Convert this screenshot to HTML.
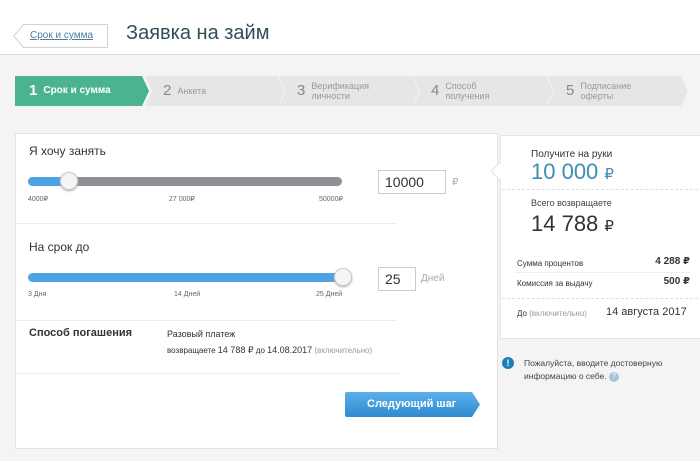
<!DOCTYPE html><html><head><meta charset="utf-8"><style>
body{margin:0;width:700px;height:461px;background:#f4f4f4;font-family:"Liberation Sans","DejaVu Sans",sans-serif;position:relative;overflow:hidden;color:#333}
.a{position:absolute}
.hdr{left:0;top:0;width:700px;height:54px;background:#fff;border-bottom:1px solid #d8d8d8}
.step{top:76px;height:30px;background:#e6e6e8;clip-path:polygon(0 0,calc(100% - 7px) 0,100% 50%,calc(100% - 7px) 100%,0 100%,7px 50%);color:#999;font-size:9px;line-height:10px;display:flex;align-items:center}
.step b{font-size:15px;font-weight:normal;margin-right:6px;color:#888}
.panel{left:15px;top:133px;width:481px;height:314px;background:#fff;border:1px solid #e2e2e2}
.track{height:9px;border-radius:5px}
.thumb{width:16px;height:16px;border-radius:50%;background:#f5f5f5;border:1px solid #ccc;box-shadow:0 1px 2px #aaa}
.lbl{font-size:7px;color:#666;top:0}
.inp{border:1px solid #ccc;background:#fff;font-size:14px;color:#333;padding-left:6px;box-sizing:border-box;line-height:22px}
.hr{height:1px;background:#ececec}
</style></head><body>
<div class="a hdr"></div>
<svg class="a" style="left:13px;top:24px" width="96" height="24"><path d="M10.5 0.5H94.5V23.5H10.5L0.8 12Z" fill="#fff" stroke="#d2d2d2"/></svg>
<div class="a" style="left:30px;top:30px;font-size:10px;color:#4a7fa5;text-decoration:underline">Срок и сумма</div>
<div class="a" style="left:126px;top:22px;font-size:20px;color:#2f4f57">Заявка на займ</div>
<div class="a step" style="left:15px;width:134px;background:#4bb38e;color:#fff;font-weight:bold;font-size:10px;clip-path:polygon(0 0,calc(100% - 7px) 0,100% 50%,calc(100% - 7px) 100%,0 100%)"><span style="padding-left:14px"></span><b style="color:#fff;font-weight:bold">1</b>Срок и сумма</div>
<div class="a step" style="left:145px;width:140px"><span style="padding-left:18px"></span><b>2</b>Анкета</div>
<div class="a step" style="left:279px;width:140px"><span style="padding-left:18px"></span><b>3</b>Верификация<br>личности</div>
<div class="a step" style="left:413px;width:140px"><span style="padding-left:18px"></span><b>4</b>Способ<br>получения</div>
<div class="a step" style="left:547px;width:141px"><span style="padding-left:19px"></span><b>5</b>Подписание<br>оферты</div>

<div class="a panel"></div>
<div class="a" style="left:29px;top:144px;font-size:12px;color:#333">Я хочу занять</div>
<div class="a track" style="left:28px;top:177px;width:314px;background:#8f9196"></div>
<div class="a track" style="left:28px;top:177px;width:45px;background:#4ea3e3"></div>
<div class="a thumb" style="left:60px;top:172px"></div>
<div class="a lbl" style="left:28px;top:195px">4000₽</div>
<div class="a lbl" style="left:169px;top:195px">27 000₽</div>
<div class="a lbl" style="left:319px;top:195px">50000₽</div>
<div class="a inp" style="left:378px;top:170px;width:68px;height:24px">10000</div>
<div class="a" style="left:452px;top:177px;font-size:10px;color:#aaa">₽</div>
<div class="a hr" style="left:16px;top:223px;width:380px"></div>
<div class="a" style="left:29px;top:240px;font-size:12px">На срок до</div>
<div class="a track" style="left:28px;top:273px;width:320px;background:#4ea3e3"></div>
<div class="a thumb" style="left:334px;top:268px"></div>
<div class="a lbl" style="left:28px;top:291px">3 Дня</div>
<div class="a lbl" style="left:174px;top:291px">14 Дней</div>
<div class="a lbl" style="left:316px;top:291px">25 Дней</div>
<div class="a inp" style="left:378px;top:267px;width:38px;height:24px">25</div>
<div class="a" style="left:421px;top:273px;font-size:10px;color:#aaa">Дней</div>
<div class="a hr" style="left:16px;top:320px;width:380px"></div>
<div class="a" style="left:29px;top:327px;font-size:11px;font-weight:bold;color:#333">Способ погашения</div>
<div class="a" style="left:167px;top:329px;font-size:9px">Разовый платеж</div>
<div class="a" style="left:167px;top:345px;font-size:8px">возвращаете <span style="font-size:9px">14 788 ₽</span> до <span style="font-size:9px">14.08.2017</span> <span style="color:#999">(включительно)</span></div>
<div class="a hr" style="left:16px;top:373px;width:385px"></div>
<div class="a" style="left:345px;top:392px;width:135px;height:25px;background:linear-gradient(#5cb0ea,#2f8ad0);clip-path:polygon(0 0,calc(100% - 8px) 0,100% 50%,calc(100% - 8px) 100%,0 100%);border-radius:2px;color:#fff;font-size:11px;font-weight:bold;line-height:25px;text-indent:22px">Следующий шаг</div>

<div class="a" style="left:500px;top:135px;width:200px;height:202px;background:#fff;border:1px solid #e4e4e4"></div>
<div class="a" style="left:493px;top:165px;width:12px;height:12px;background:#fff;transform:rotate(45deg);border-left:1px solid #e4e4e4;border-bottom:1px solid #e4e4e4"></div>
<div class="a" style="left:531px;top:149px;font-size:10px;color:#333">Получите на руки</div>
<div class="a" style="left:531px;top:159px;font-size:22px;color:#3e8db3">10 000 <span style="font-size:15px">₽</span></div>
<div class="a" style="left:502px;top:189px;width:196px;border-top:1px dashed #ddd"></div>
<div class="a" style="left:531px;top:198px;font-size:9px;color:#444">Всего возвращаете</div>
<div class="a" style="left:531px;top:211px;font-size:22px;color:#333">14 788 <span style="font-size:15px">₽</span></div>
<div class="a" style="left:517px;top:259px;font-size:8px">Сумма процентов</div>
<div class="a" style="left:640px;top:256px;font-size:10px;font-weight:bold;width:50px;text-align:right">4 288 ₽</div>
<div class="a" style="left:515px;top:272px;width:175px;height:1px;background:#eee"></div>
<div class="a" style="left:517px;top:279px;font-size:8px">Комиссия за выдачу</div>
<div class="a" style="left:640px;top:276px;font-size:10px;font-weight:bold;width:50px;text-align:right">500 ₽</div>
<div class="a" style="left:502px;top:298px;width:196px;border-top:1px dashed #ddd"></div>
<div class="a" style="left:517px;top:309px;font-size:8px">До <span style="color:#999">(включительно)</span></div>
<div class="a" style="left:606px;top:306px;font-size:11px">14 августа 2017</div>
<div class="a" style="left:502px;top:357px;width:12px;height:12px;border-radius:50%;background:#1f7db5;color:#fff;font-size:9px;font-weight:bold;text-align:center;line-height:12px">!</div>
<div class="a" style="left:524px;top:357px;font-size:8.5px;line-height:13px;color:#444">Пожалуйста, вводите достоверную<br>информацию о себе. <span style="display:inline-block;width:10px;height:10px;border-radius:50%;background:#a9c3d6;color:#fff;font-size:7px;text-align:center;line-height:10px;vertical-align:middle">?</span></div>
</body></html>
